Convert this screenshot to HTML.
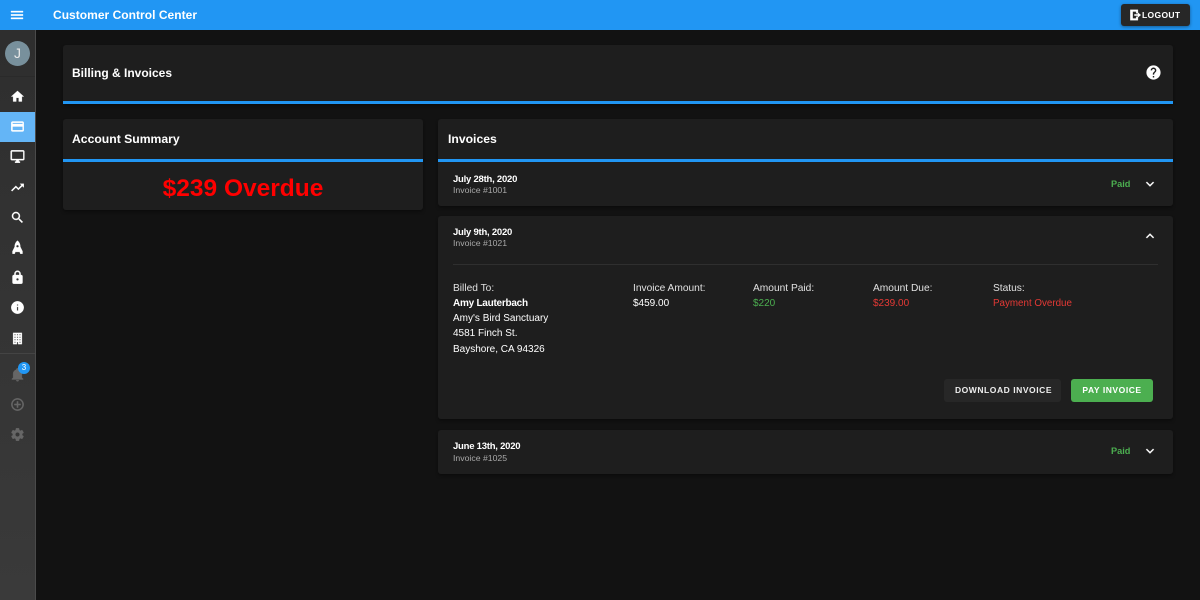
<!DOCTYPE html>
<html><head><meta charset="utf-8"><title>Customer Control Center</title>
<style>
*{box-sizing:border-box}
html,body{margin:0;padding:0;width:1200px;height:600px;overflow:hidden;background:#121212;font-family:"Liberation Sans",sans-serif;color:#fff}
.a{position:absolute}
.t{position:absolute;white-space:nowrap;line-height:16px;font-size:10px}
.card{position:absolute;background:#1e1e1e;border-radius:3px;box-shadow:0 2px 3px rgba(0,0,0,.35)}
.line{position:absolute;height:3px;background:#2196f3}
svg{position:absolute;fill:#fff;stroke:#fff;stroke-width:.5}
.i{width:15px;height:15px;left:10px}
.m{fill:#666;stroke:#666}
.h{font-weight:bold;font-size:12.2px}
.g{color:#a9a9a9;font-size:8.7px}
.d{font-size:9.5px;letter-spacing:-.23px;font-weight:bold;color:#fff}
.p{color:#4caf50;font-weight:bold;font-size:9.2px}
.l{color:#e0e0e0;font-size:10.2px}
.b{font-size:8.5px;font-weight:bold;letter-spacing:.55px;text-align:center}
.c{left:1142px;width:16px;height:16px;stroke-width:.3}
</style></head><body>
<div class="a" style="left:0;top:30px;width:36px;height:570px;background:linear-gradient(180deg,#2e2e2e,#3a3a3a);border-right:1px solid #4a4a4a"></div>
<div class="a" style="left:0;top:0;width:1200px;height:30px;background:#2196f3"></div>
<svg style="left:9px;top:7px;width:16px;height:16px" viewBox="0 0 24 24"><path d="M3,6H21V8H3V6M3,11H21V13H3V11M3,16H21V18H3V16Z"/></svg>
<div class="t" style="left:53px;top:7px;font-size:12px;font-weight:bold;letter-spacing:.03px;color:#fff">Customer Control Center</div>
<div class="a" style="left:1121px;top:4px;width:69px;height:22px;background:#272727;border-radius:3px;box-shadow:0 1px 3px rgba(0,0,0,.4)"></div>
<svg style="left:1128px;top:8px;width:14px;height:14px" viewBox="0 0 24 24"><path d="M4,3H17V9H14V6H8V18H14V15H17V21H4V3ZM11,11H17V8L22,12L17,16V13H11V11Z"/></svg>
<div class="t" style="left:1142px;top:7px;font-size:8.5px;font-weight:bold;letter-spacing:.35px">LOGOUT</div>

<div class="a" style="left:5px;top:41px;width:25px;height:25px;border-radius:50%;background:#78909c"></div>
<div class="t" style="left:5px;top:45px;width:25px;text-align:center;font-size:14px;color:#e8e8e8">J</div>
<div class="a" style="left:0;top:76px;width:35px;height:1px;background:#2a2a2a"></div>
<div class="a" style="left:0;top:112px;width:35px;height:30px;background:#64b5f6"></div>
<div class="a" style="left:0;top:353px;width:35px;height:1px;background:#444"></div>

<svg class="i" style="top:89px" viewBox="0 0 24 24"><path d="M10,20V14H14V20H19V12H22L12,3L2,12H5V20H10Z"/></svg>
<svg class="i" style="top:119px" viewBox="0 0 24 24"><path d="M20,8H4V6H20M20,18H4V12H20M20,4H4C2.89,4 2,4.89 2,6V18A2,2 0 0,0 4,20H20A2,2 0 0,0 22,18V6C22,4.89 21.1,4 20,4Z"/></svg>
<svg class="i" style="top:149px" viewBox="0 0 24 24"><path d="M21,16H3V4H21M21,2H3C1.89,2 1,2.89 1,4V16A2,2 0 0,0 3,18H10V20H8V22H16V20H14V18H21A2,2 0 0,0 23,16V4C23,2.89 22.1,2 21,2Z"/></svg>
<svg class="i" style="top:180px" viewBox="0 0 24 24"><path d="M16,6L18.29,8.29L13.41,13.17L9.41,9.17L2,16.59L3.41,18L9.41,12L13.41,16L19.71,9.71L22,12V6H16Z"/></svg>
<svg class="i" style="top:210px" viewBox="0 0 24 24"><path d="M9.5,3A6.5,6.5 0 0,1 16,9.5C16,11.11 15.41,12.59 14.44,13.73L14.71,14H15.5L20.5,19L19,20.5L14,15.5V14.71L13.73,14.44C12.59,15.41 11.11,16 9.5,16A6.5,6.5 0 0,1 3,9.5A6.5,6.5 0 0,1 9.5,3M9.5,5C7,5 5,7 5,9.5C5,12 7,14 9.5,14C12,14 14,12 14,9.5C14,7 12,5 9.5,5Z"/></svg>
<svg class="i" style="top:240px" viewBox="0 0 24 24"><path fill-rule="evenodd" d="M12,1C12,1 16.5,4 16.5,11L20,18V22H16.5L15.5,19H8.5L7.5,22H4V18L7.5,11C7.5,4 12,1 12,1ZM12,8A2,2 0 1,0 12,12A2,2 0 1,0 12,8Z"/></svg>
<svg class="i" style="top:270px" viewBox="0 0 24 24"><path d="M12,17A2,2 0 0,0 14,15C14,13.89 13.1,13 12,13A2,2 0 0,0 10,15A2,2 0 0,0 12,17M18,8A2,2 0 0,1 20,10V20A2,2 0 0,1 18,22H6A2,2 0 0,1 4,20V10C4,8.89 4.9,8 6,8H7V6A5,5 0 0,1 12,1A5,5 0 0,1 17,6V8H18M12,3A3,3 0 0,0 9,6V8H15V6A3,3 0 0,0 12,3Z"/></svg>
<svg class="i" style="top:300px" viewBox="0 0 24 24"><path d="M13,9H11V7H13M13,17H11V11H13M12,2A10,10 0 0,0 2,12A10,10 0 0,0 12,22A10,10 0 0,0 22,12A10,10 0 0,0 12,2Z"/></svg>
<svg class="i" style="top:331px" viewBox="0 0 24 24"><path d="M5,3V21H11V17.5H13V21H19V3H5M7,5H9V7H7V5M11,5H13V7H11V5M15,5H17V7H15V5M7,9H9V11H7V9M11,9H13V11H11V9M15,9H17V11H15V9M7,13H9V15H7V13M11,13H13V15H11V13M15,13H17V15H15V13M7,17H9V19H7V17M15,17H17V19H15V17Z"/></svg>
<svg class="i m" style="top:367px" viewBox="0 0 24 24"><path d="M21,19V20H3V19L5,17V11C5,7.9 7.03,5.17 10,4.29C10,4.19 10,4.1 10,4A2,2 0 0,1 12,2A2,2 0 0,1 14,4C14,4.1 14,4.19 14,4.29C16.97,5.17 19,7.9 19,11V17L21,19M14,21A2,2 0 0,1 12,23A2,2 0 0,1 10,21"/></svg>
<div class="a" style="left:18px;top:362px;width:12px;height:12px;border-radius:50%;background:#2196f3"></div>
<div class="t" style="left:18px;top:360px;width:12px;text-align:center;font-size:8px;color:#fff">3</div>
<svg class="i m" style="top:397px" viewBox="0 0 24 24"><path d="M12,20C7.59,20 4,16.41 4,12C4,7.59 7.59,4 12,4C16.41,4 20,7.59 20,12C20,16.41 16.41,20 12,20M12,2A10,10 0 0,0 2,12A10,10 0 0,0 12,22A10,10 0 0,0 22,12A10,10 0 0,0 12,2M13,7H11V11H7V13H11V17H13V13H17V11H13V7Z"/></svg>
<svg class="i m" style="top:427px" viewBox="0 0 24 24"><path d="M12,15.5A3.5,3.5 0 0,1 8.5,12A3.5,3.5 0 0,1 12,8.5A3.5,3.5 0 0,1 15.5,12A3.5,3.5 0 0,1 12,15.5M19.43,12.97C19.47,12.65 19.5,12.33 19.5,12C19.5,11.67 19.47,11.34 19.43,11L21.54,9.37C21.73,9.22 21.78,8.95 21.66,8.73L19.66,5.27C19.54,5.05 19.27,4.96 19.05,5.05L16.56,6.05C16.04,5.66 15.5,5.32 14.87,5.07L14.5,2.42C14.46,2.18 14.25,2 14,2H10C9.75,2 9.54,2.18 9.5,2.42L9.13,5.07C8.5,5.32 7.96,5.66 7.44,6.05L4.95,5.05C4.73,4.96 4.46,5.05 4.34,5.27L2.34,8.73C2.21,8.95 2.27,9.22 2.46,9.37L4.57,11C4.53,11.34 4.5,11.67 4.5,12C4.5,12.33 4.53,12.65 4.57,12.97L2.46,14.63C2.27,14.78 2.21,15.05 2.34,15.27L4.34,18.73C4.46,18.95 4.73,19.03 4.95,18.95L7.44,17.94C7.96,18.34 8.5,18.68 9.13,18.93L9.5,21.58C9.54,21.82 9.75,22 10,22H14C14.25,22 14.46,21.82 14.5,21.58L14.87,18.93C15.5,18.67 16.04,18.34 16.56,17.94L19.05,18.95C19.27,19.03 19.54,18.95 19.66,18.73L21.66,15.27C21.78,15.05 21.73,14.78 21.54,14.63L19.43,12.97Z"/></svg>

<div class="card" style="left:63px;top:45px;width:1110px;height:59px"></div>
<div class="line" style="left:63px;top:101px;width:1110px"></div>
<div class="t h" style="left:72px;top:65px;font-size:12px">Billing &amp; Invoices</div>
<svg style="left:1145px;top:64px;width:17px;height:17px;stroke:none" viewBox="0 0 24 24"><path d="M15.07,11.25L14.17,12.17C13.45,12.89 13,13.5 13,15H11V14.5C11,13.39 11.45,12.39 12.17,11.67L13.41,10.41C13.78,10.05 14,9.55 14,9C14,7.89 13.1,7 12,7A2,2 0 0,0 10,9H8A4,4 0 0,1 12,5A4,4 0 0,1 16,9C16,9.88 15.64,10.67 15.07,11.25M13,19H11V17H13M12,2A10,10 0 0,0 2,12A10,10 0 0,0 12,22A10,10 0 0,0 22,12C22,6.47 17.5,2 12,2Z"/></svg>

<div class="card" style="left:63px;top:119px;width:360px;height:91px"></div>
<div class="line" style="left:63px;top:159px;width:360px"></div>
<div class="t h" style="left:72px;top:131px">Account Summary</div>
<div class="t" style="left:63px;top:176px;width:360px;line-height:26px;text-align:center;font-size:24.5px;font-weight:bold;color:#f00">$239 Overdue</div>

<div class="card" style="left:438px;top:119px;width:735px;height:87px"></div>
<div class="line" style="left:438px;top:159px;width:735px"></div>
<div class="t h" style="left:448px;top:131px">Invoices</div>
<div class="t d" style="left:453px;top:172px">July 28th, 2020</div>
<div class="t g" style="left:453px;top:182px">Invoice #1001</div>
<div class="t p" style="left:1111px;top:176px">Paid</div>
<svg class="c" style="top:176px" viewBox="0 0 24 24"><path d="M7.41,8.58L12,13.17L16.59,8.58L18,10L12,16L6,10L7.41,8.58Z"/></svg>

<div class="card" style="left:438px;top:216px;width:735px;height:203px"></div>
<div class="t d" style="left:453px;top:225px">July 9th, 2020</div>
<div class="t g" style="left:453px;top:235px">Invoice #1021</div>
<svg class="c" style="top:228px" viewBox="0 0 24 24"><path d="M7.41,15.41L12,10.83L16.59,15.41L18,14L12,8L6,14L7.41,15.41Z"/></svg>
<div class="a" style="left:453px;top:264px;width:705px;height:1px;background:#2f2f2f"></div>
<div class="t l" style="left:453px;top:281px">Billed To:</div>
<div class="t" style="left:453px;top:296px;font-weight:bold;letter-spacing:-.25px">Amy Lauterbach</div>
<div class="t" style="left:453px;top:311px">Amy's Bird Sanctuary</div>
<div class="t" style="left:453px;top:326px">4581 Finch St.</div>
<div class="t" style="left:453px;top:342px">Bayshore, CA 94326</div>
<div class="t l" style="left:633px;top:281px">Invoice Amount:</div>
<div class="t" style="left:633px;top:296px">$459.00</div>
<div class="t l" style="left:753px;top:281px">Amount Paid:</div>
<div class="t" style="left:753px;top:296px;color:#4caf50">$220</div>
<div class="t l" style="left:873px;top:281px">Amount Due:</div>
<div class="t" style="left:873px;top:296px;color:#e53935">$239.00</div>
<div class="t l" style="left:993px;top:281px">Status:</div>
<div class="t" style="left:993px;top:296px;color:#e53935;font-size:9.8px">Payment Overdue</div>
<div class="a" style="left:944px;top:379px;width:117px;height:23px;background:#272727;border-radius:3px"></div>
<div class="t b" style="left:945px;top:382px;width:117px;color:#eee">DOWNLOAD INVOICE</div>
<div class="a" style="left:1071px;top:379px;width:82px;height:23px;background:#4caf50;border-radius:3px"></div>
<div class="t b" style="left:1071px;top:382px;width:82px;color:#fff">PAY INVOICE</div>

<div class="card" style="left:438px;top:430px;width:735px;height:44px"></div>
<div class="t d" style="left:453px;top:439px">June 13th, 2020</div>
<div class="t g" style="left:453px;top:450px">Invoice #1025</div>
<div class="t p" style="left:1111px;top:443px">Paid</div>
<svg class="c" style="top:443px" viewBox="0 0 24 24"><path d="M7.41,8.58L12,13.17L16.59,8.58L18,10L12,16L6,10L7.41,8.58Z"/></svg>
</body></html>
